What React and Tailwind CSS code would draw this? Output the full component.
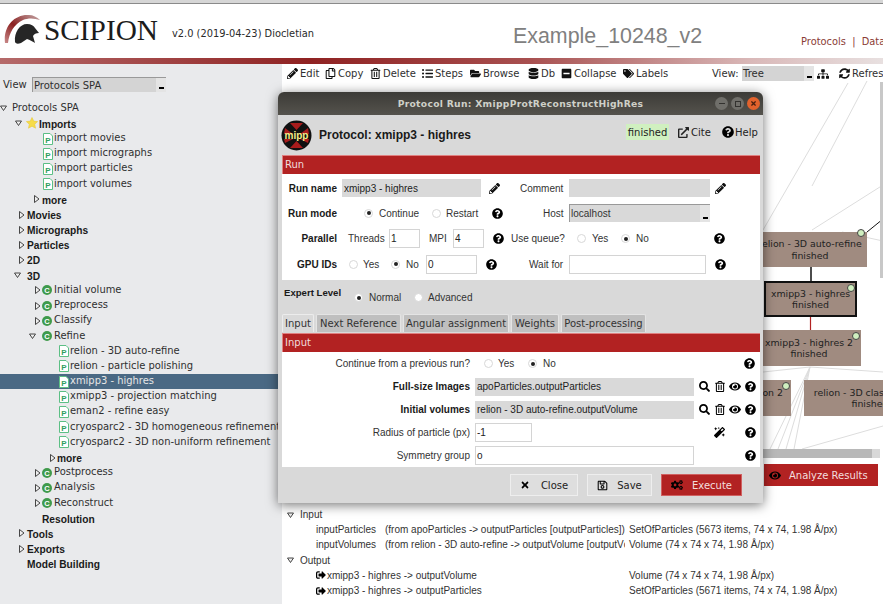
import {
  FaCogs, FaDatabase, FaExternalLinkAlt, FaEye, FaFolderOpen, FaListUl, FaMagic, FaMinusSquare,
  FaPencilAlt, FaQuestionCircle, FaRegCopy, FaRegSave, FaRegTrashAlt, FaSearch, FaSignOutAlt, FaSitemap, FaSyncAlt,
  FaTags, FaTimes,
} from 'react-icons/fa'

const DEJA = "font-['DejaVu_Sans',sans-serif]"
const LIB = "font-['Liberation_Sans',sans-serif]"

// Tree rows, all 15.2px tall
const tree = [
  { label: 'Protocols SPA', pad: 'pl-0', tri: 'open', triW: 'w-[12px]' },
  { label: 'Imports', pad: 'pl-[15px]', tri: 'open', triW: 'w-[11px]', icon: 'star', bold: true },
  { label: 'import movies', pad: 'pl-[43px]', icon: 'doc' },
  { label: 'import micrographs', pad: 'pl-[43px]', icon: 'doc' },
  { label: 'import particles', pad: 'pl-[43px]', icon: 'doc' },
  { label: 'import volumes', pad: 'pl-[43px]', icon: 'doc' },
  { label: 'more', pad: 'pl-[33px]', tri: 'closed', triW: 'w-[9px]', bold: true },
  { label: 'Movies', pad: 'pl-[18px]', tri: 'closed', triW: 'w-[9px]', bold: true },
  { label: 'Micrographs', pad: 'pl-[18px]', tri: 'closed', triW: 'w-[9px]', bold: true },
  { label: 'Particles', pad: 'pl-[18px]', tri: 'closed', triW: 'w-[9px]', bold: true },
  { label: '2D', pad: 'pl-[18px]', tri: 'closed', triW: 'w-[9px]', bold: true },
  { label: '3D', pad: 'pl-[14px]', tri: 'open', triW: 'w-[13px]', bold: true },
  { label: 'Initial volume', pad: 'pl-[34px]', tri: 'closed', triW: 'w-[8px]', icon: 'cat' },
  { label: 'Preprocess', pad: 'pl-[34px]', tri: 'closed', triW: 'w-[8px]', icon: 'cat' },
  { label: 'Classify', pad: 'pl-[34px]', tri: 'closed', triW: 'w-[8px]', icon: 'cat' },
  { label: 'Refine', pad: 'pl-[29px]', tri: 'open', triW: 'w-[13px]', icon: 'cat' },
  { label: 'relion - 3D auto-refine', pad: 'pl-[59px]', icon: 'doc' },
  { label: 'relion - particle polishing', pad: 'pl-[59px]', icon: 'doc' },
  { label: 'xmipp3 - highres', pad: 'pl-[59px]', icon: 'doc', selected: true },
  { label: 'xmipp3 - projection matching', pad: 'pl-[59px]', icon: 'doc' },
  { label: 'eman2 - refine easy', pad: 'pl-[59px]', icon: 'doc' },
  { label: 'cryosparc2 - 3D homogeneous refinement', pad: 'pl-[59px]', icon: 'doc' },
  { label: 'cryosparc2 - 3D non-uniform refinement', pad: 'pl-[59px]', icon: 'doc' },
  { label: 'more', pad: 'pl-[49px]', tri: 'closed', triW: 'w-[8px]', bold: true },
  { label: 'Postprocess', pad: 'pl-[34px]', tri: 'closed', triW: 'w-[8px]', icon: 'cat' },
  { label: 'Analysis', pad: 'pl-[34px]', tri: 'closed', triW: 'w-[8px]', icon: 'cat' },
  { label: 'Reconstruct', pad: 'pl-[34px]', tri: 'closed', triW: 'w-[8px]', icon: 'cat' },
  { label: 'Resolution', pad: 'pl-[42px]', bold: true },
  { label: 'Tools', pad: 'pl-[18px]', tri: 'closed', triW: 'w-[9px]', bold: true },
  { label: 'Exports', pad: 'pl-[18px]', tri: 'closed', triW: 'w-[9px]', bold: true },
  { label: 'Model Building', pad: 'pl-[27px]', bold: true },
]

const tools = [
  { label: 'Edit', Icon: FaPencilAlt, cls: 'w-[38px]' },
  { label: 'Copy', Icon: FaRegCopy, cls: 'w-[45px]' },
  { label: 'Delete', Icon: FaRegTrashAlt, cls: 'w-[52px]' },
  { label: 'Steps', Icon: FaListUl, cls: 'w-[48px]' },
  { label: 'Browse', Icon: FaFolderOpen, cls: 'w-[58px]' },
  { label: 'Db', Icon: FaDatabase, cls: 'w-[33px]' },
  { label: 'Collapse', Icon: FaMinusSquare, cls: 'w-[62px]' },
  { label: 'Labels', Icon: FaTags, cls: 'w-[89px]' },
]

function Triangle({ open }) {
  return (
    <svg width="7" height="8" viewBox="0 0 7 8" className="shrink-0">
      <path
        d={open ? 'M0.5 2 L6.5 2 L3.5 6.5 Z' : 'M1.5 0.5 L6 4 L1.5 7.5 Z'}
        fill="#eeeeee"
        stroke="#333333"
        strokeWidth="0.9"
      />
    </svg>
  )
}

function DocIcon() {
  return (
    <svg width="10" height="12" viewBox="0 0 10 12" className="shrink-0">
      <path d="M0.5 0.5 H7 L9.5 3 V11.5 H0.5 Z" fill="#ffffff" stroke="#5cbf85" />
      <text x="5" y="9.5" fontSize="8" fontWeight="700" textAnchor="middle" fill="#2f9e5f" fontFamily="Liberation Sans">P</text>
    </svg>
  )
}

function CatIcon() {
  return (
    <svg width="10" height="10" viewBox="0 0 10 10" className="shrink-0">
      <circle cx="5" cy="5" r="5" fill="#3f9a4b" />
      <text x="5" y="7.6" fontSize="7.5" fontWeight="700" textAnchor="middle" fill="#ffffff" fontFamily="Liberation Sans">C</text>
    </svg>
  )
}

function StarIcon() {
  return (
    <svg width="12" height="12" viewBox="0 0 12 12" className="shrink-0">
      <path d="M6 0.5 L7.7 4.1 L11.6 4.6 L8.7 7.2 L9.5 11.2 L6 9.2 L2.5 11.2 L3.3 7.2 L0.4 4.6 L4.3 4.1 Z" fill="#f6dc4a" stroke="#e8c93a" strokeWidth="0.6" />
    </svg>
  )
}

function TreeRow({ row }) {
  return (
    <div className={`flex h-[15.2px] items-center ${row.pad} ${row.selected ? 'bg-[#4a6984] text-[#e6e6e6]' : 'text-[#2f2f2f]'}`}>
      {row.tri && (
        <span className={`flex shrink-0 ${row.triW}`}>
          <Triangle open={row.tri === 'open'} />
        </span>
      )}
      {row.icon === 'star' && <span className="flex w-[13px] shrink-0"><StarIcon /></span>}
      {row.icon === 'doc' && <span className="flex w-[11px] shrink-0"><DocIcon /></span>}
      {row.icon === 'cat' && <span className="flex w-[12px] shrink-0"><CatIcon /></span>}
      {row.bold
        ? <span className={`${LIB} whitespace-nowrap pt-[2px] text-[10.2px] font-bold text-[#1a1a1a]`}>{row.label}</span>
        : <span className={`${DEJA} whitespace-nowrap text-[9.95px]`}>{row.label}</span>}
    </div>
  )
}

function ComboArrow() {
  return (
    <span className="flex h-full w-[10px] shrink-0 items-end justify-center bg-[#e4e4e4] pb-[3px]">
      <span className="h-[2px] w-[5px] bg-black" />
    </span>
  )
}

function Radio({ checked, cls = '' }) {
  return (
    <span className={`flex h-[9px] w-[9px] shrink-0 items-center justify-center rounded-full border border-[#d8d8d8] bg-white ${cls}`}>
      {checked && <span className="h-[4px] w-[4px] rounded-full bg-[#222222]" />}
    </span>
  )
}

function Help({ cls = '' }) {
  return <FaQuestionCircle className={`h-[11px] w-[11px] shrink-0 text-black ${cls}`} />
}

function Field({ cls, children }) {
  return (
    <span className={`flex shrink-0 items-center border border-[#d4d4d4] bg-white pl-[1px] text-[10px] text-[#222222] ${cls}`}>
      {children}
    </span>
  )
}

function ReadOnly({ cls, children }) {
  return (
    <span className={`flex h-[18px] shrink-0 items-center bg-[#d9d9d9] pl-[2px] text-[10px] text-[#222222] ${cls}`}>
      {children}
    </span>
  )
}

function RedBar({ label, cls }) {
  return (
    <div className={`${DEJA} flex items-center border-t border-l border-[#e08080] border-r-[#7a1515] border-b-[#7a1515] bg-[#b22222] pb-[2px] pl-[2px] text-[10px] text-[#f0dcdc] ${cls}`}>
      {label}
    </div>
  )
}

function RunForm() {
  return (
    <div className={`${LIB} h-[106px] bg-white pt-[1.5px] text-[10px] text-[#333333]`}>
      <div className="flex h-[25.3px] items-center">
        <span className="w-[55px] shrink-0 text-right font-bold text-[#1a1a1a]">Run name</span>
        <ReadOnly cls="ml-[5px] w-[139px]">xmipp3 - highres</ReadOnly>
        <FaPencilAlt className="ml-[8px] h-[11px] w-[11px] shrink-0 text-[#111111]" />
        <span className="ml-[20px] w-[45px] shrink-0">Comment</span>
        <ReadOnly cls="ml-[4px] w-[141px]" />
        <FaPencilAlt className="ml-[5px] h-[11px] w-[11px] shrink-0 text-[#111111]" />
      </div>
      <div className="flex h-[25.3px] items-center">
        <span className="w-[55px] shrink-0 text-right font-bold text-[#1a1a1a]">Run mode</span>
        <Radio checked cls="ml-[27px]" />
        <span className="ml-[6px] w-[45px] shrink-0">Continue</span>
        <Radio cls="ml-[8px]" />
        <span className="ml-[5px] w-[34px] shrink-0">Restart</span>
        <Help cls="ml-[12px]" />
        <span className="ml-[40px] w-[26px] shrink-0">Host</span>
        <span className="flex h-[18px] w-[141px] shrink-0 items-center justify-between border-t border-l border-[#999999] bg-[#d9d9d9] pl-[1px]">
          localhost
          <ComboArrow />
        </span>
      </div>
      <div className="flex h-[25.3px] items-center">
        <span className="w-[55px] shrink-0 text-right font-bold text-[#1a1a1a]">Parallel</span>
        <span className="ml-[11px] w-[41px] shrink-0">Threads</span>
        <Field cls="h-[19px] w-[31px]">1</Field>
        <span className="ml-[9px] w-[24px] shrink-0">MPI</span>
        <Field cls="h-[19px] w-[31px]">4</Field>
        <Help cls="ml-[9px]" />
        <span className="ml-[7px] w-[53px] shrink-0 whitespace-nowrap">Use queue?</span>
        <Radio cls="ml-[13px]" />
        <span className="ml-[6px] w-[29px] shrink-0">Yes</span>
        <Radio checked />
        <span className="ml-[6px] w-[78px] shrink-0">No</span>
        <Help />
      </div>
      <div className="flex h-[25.3px] items-center">
        <span className="w-[55px] shrink-0 text-right font-bold text-[#1a1a1a]">GPU IDs</span>
        <Radio cls="ml-[12px]" />
        <span className="ml-[5px] w-[28px] shrink-0">Yes</span>
        <Radio checked />
        <span className="ml-[6px] w-[20px] shrink-0">No</span>
        <Field cls="h-[19px] w-[51px]">0</Field>
        <Help cls="ml-[9px]" />
        <span className="ml-[32px] w-[40px] shrink-0">Wait for</span>
        <Field cls="h-[19px] w-[137px]" />
        <Help cls="ml-[9px]" />
      </div>
    </div>
  )
}

function ObjectIcons() {
  return (
    <>
      <FaSearch className="ml-[5px] h-[11px] w-[11px] shrink-0 text-black" />
      <FaRegTrashAlt className="ml-[5px] h-[11px] w-[10px] shrink-0 text-black" />
      <FaEye className="ml-[4px] h-[11px] w-[12px] shrink-0 text-black" />
      <Help cls="ml-[4px]" />
    </>
  )
}

function InputForm() {
  return (
    <div className={`${LIB} h-[115px] bg-white text-[10px] text-[#333333]`}>
      <div className="flex h-[23px] items-center">
        <span className="w-[188px] shrink-0 text-right">Continue from a previous run?</span>
        <Radio cls="ml-[14px]" />
        <span className="ml-[5px] w-[30px] shrink-0">Yes</span>
        <Radio checked />
        <span className="ml-[6px] w-[201px] shrink-0">No</span>
        <Help />
      </div>
      <div className="flex h-[23px] items-center">
        <span className="w-[188px] shrink-0 text-right font-bold text-[#1a1a1a]">Full-size Images</span>
        <ReadOnly cls="ml-[5px] w-[219px]">apoParticles.outputParticles</ReadOnly>
        <ObjectIcons />
      </div>
      <div className="flex h-[23px] items-center">
        <span className="w-[188px] shrink-0 text-right font-bold text-[#1a1a1a]">Initial volumes</span>
        <ReadOnly cls="ml-[5px] w-[219px]">relion - 3D auto-refine.outputVolume</ReadOnly>
        <ObjectIcons />
      </div>
      <div className="flex h-[23px] items-center">
        <span className="w-[188px] shrink-0 text-right">Radius of particle (px)</span>
        <Field cls="ml-[5px] h-[19px] w-[57px]">-1</Field>
        <FaMagic className="ml-[182px] h-[11px] w-[11px] shrink-0 text-black" />
        <Help cls="ml-[20px]" />
      </div>
      <div className="flex h-[23px] items-center">
        <span className="w-[188px] shrink-0 text-right">Symmetry group</span>
        <Field cls="ml-[5px] h-[19px] w-[219px]">o</Field>
        <Help cls="ml-[51px]" />
      </div>
    </div>
  )
}

function Dialog() {
  const tabs = [
    { label: 'Next Reference', cls: 'w-[85px]' },
    { label: 'Angular assignment', cls: 'w-[106px]' },
    { label: 'Weights', cls: 'w-[48px]' },
    { label: 'Post-processing', cls: 'w-[85px]' },
  ]
  return (
    <div className="absolute left-[278px] top-[92px] h-[411px] w-[485px] rounded-t-[6px] bg-[#d9d9d9] shadow-[0_2px_12px_rgba(0,0,0,0.55)]">
      <div className={`${DEJA} relative flex h-[23px] items-center justify-center rounded-t-[6px] bg-gradient-to-b from-[#3c3b37] to-[#55534d] text-[9.2px] font-bold tracking-[0.3px] text-[#cfd0c8]`}>
        Protocol Run: XmippProtReconstructHighRes
        <div className="absolute right-[3px] top-[5px] flex gap-[3px]">
          <span className="flex h-[13px] w-[13px] items-center justify-center rounded-full bg-[#706f6a]"><span className="h-[1px] w-[6px] bg-[#33322f]" /></span>
          <span className="flex h-[13px] w-[13px] items-center justify-center rounded-full bg-[#706f6a]"><span className="h-[6px] w-[6px] border border-[#33322f]" /></span>
          <span className="flex h-[13px] w-[13px] items-center justify-center rounded-full bg-[#e2622c]"><FaTimes className="h-[7px] w-[7px] text-[#4a2010]" /></span>
        </div>
      </div>

      <div className="pl-[4px] pr-[3px]">
        <div className="flex h-[40px] items-center">
          <svg width="31" height="31" viewBox="0 0 31 31" className="-ml-[1px] shrink-0">
            <circle cx="15.5" cy="15.5" r="15" fill="#111111" />
            <path d="M9 3 L15.5 10 L22 3 Z M9 28 L15.5 21 L22 28 Z" fill="#a81c1c" />
            <path d="M4 8 L12 14 L3 14 Z M27 8 L19 14 L28 14 Z M4 23 L12 19 L3 19 Z M27 23 L19 19 L28 19 Z" fill="#a81c1c" />
            <text x="15.5" y="19" fontSize="10" fontWeight="700" textAnchor="middle" fill="#f5ee8a" fontFamily="Liberation Sans">mipp</text>
          </svg>
          <span className={`${LIB} ml-[7px] w-[307px] shrink-0 text-[12px] font-bold text-[#1a1a1a]`}>Protocol: xmipp3 - highres</span>
          <div className={`${DEJA} flex items-center pb-[6px] text-[10px] text-[#222222]`}>
            <span className="flex h-[16px] w-[43px] shrink-0 items-center justify-center bg-[#d0f0c0]">finished</span>
            <FaExternalLinkAlt className="ml-[9px] h-[11px] w-[11px] shrink-0" />
            <span className="ml-[2px] w-[31px] shrink-0">Cite</span>
            <FaQuestionCircle className="h-[12px] w-[12px] shrink-0 text-black" />
            <span className="ml-[1px]">Help</span>
          </div>
        </div>

        <RedBar label="Run" cls="h-[19px]" />
        <RunForm />

        <div className={`${LIB} flex h-[34px] items-center pt-[1px] text-[10px] text-[#333333]`}>
          <span className="-mt-[9px] w-[72px] shrink-0 pl-[2px] text-[9.6px] font-bold text-[#1a1a1a]">Expert Level</span>
          <Radio checked />
          <span className="ml-[6px] w-[45px] shrink-0">Normal</span>
          <Radio />
          <span className="ml-[5px]">Advanced</span>
        </div>

        <div className={`${DEJA} flex h-[19px] gap-[2px] pb-[1px] text-[10px] text-[#333333]`}>
          <span className="flex w-[32px] items-center justify-center rounded-t-[2px] border border-b-0 border-[#ececec] bg-[#d9d9d9]">Input</span>
          {tabs.map((tab) => (
            <span key={tab.label} className={`flex items-center justify-center rounded-t-[2px] border border-b-0 border-[#e4e4e4] bg-[#bfbfbf] ${tab.cls}`}>
              {tab.label}
            </span>
          ))}
        </div>
        <RedBar label="Input" cls="h-[19px]" />
        <InputForm />

        <div className={`${DEJA} flex h-[36px] items-center pl-[228px] text-[10px] text-[#222222]`}>
          <span className="flex h-[22px] w-[68px] items-center justify-center gap-[11px] border border-[#eeeeee] bg-[#dedede]"><FaTimes className="h-[10px] w-[10px] text-black" />Close</span>
          <span className="ml-[9px] flex h-[22px] w-[65px] items-center justify-center gap-[9px] border border-[#eeeeee] bg-[#dedede]"><FaRegSave className="h-[11px] w-[11px] text-black" />Save</span>
          <span className="ml-[9px] flex h-[22px] w-[81px] items-center justify-center gap-[9px] border border-[#d06060] bg-[#b22222] text-[#f2dede]"><FaCogs className="h-[12px] w-[12px] text-black" />Execute</span>
        </div>
      </div>
    </div>
  )
}

// Workflow canvas, the boxes sit at free positions
function Canvas() {
  const node = "absolute flex flex-col items-center justify-center bg-[#a08b80] text-[9.4px] leading-[11.5px] text-[#222222]"
  const dot = 'absolute h-[8px] w-[8px] rounded-full border border-[#444444] bg-[#d0f0c0]'
  return (
    <div className={`${DEJA} relative h-[379px] overflow-hidden bg-white`}>
      <svg width="601" height="379" className="absolute left-0 top-0">
        <g stroke="#dddddd" strokeWidth="1" fill="none">
          <line x1="566" y1="2" x2="481" y2="149" />
          <line x1="585" y1="0" x2="530" y2="105" />
          <line x1="601" y1="104" x2="530" y2="149" />
          <line x1="601" y1="160" x2="560" y2="151" />
          <line x1="528" y1="286" x2="481" y2="291" />
          <line x1="528" y1="286" x2="601" y2="291" />
          <line x1="528" y1="286" x2="488" y2="368" />
          <line x1="528" y1="286" x2="496" y2="368" />
          <line x1="528" y1="286" x2="504" y2="368" />
          <line x1="528" y1="286" x2="512" y2="368" />
          <line x1="520" y1="368" x2="601" y2="345" />
        </g>
        <line x1="529" y1="186" x2="529" y2="200" stroke="#111111" strokeWidth="1.5" />
        <line x1="529" y1="186" x2="548" y2="170" stroke="#111111" strokeWidth="1" />
        <line x1="585" y1="151" x2="601" y2="138" stroke="#111111" strokeWidth="1" />
        <line x1="528.5" y1="235" x2="528.5" y2="249" stroke="#b22222" strokeWidth="1.2" />
      </svg>
      <div className={`${node} left-[471px] top-[151px] h-[35px] w-[114px]`}>
        <span className="whitespace-nowrap">relion - 3D auto-refine</span>
        <span>finished</span>
        <span className={`${dot} right-[2px] top-[-3px]`} />
      </div>
      <div className={`${node} left-[482px] top-[200px] h-[36px] w-[93px] border-2 border-[#111111]`}>
        <span className="whitespace-nowrap">xmipp3 - highres</span>
        <span>finished</span>
        <span className={`${dot} right-0 top-[1px]`} />
      </div>
      <div className={`${node} left-[475px] top-[249px] h-[36px] w-[104px]`}>
        <span className="whitespace-nowrap">xmipp3 - highres 2</span>
        <span>finished</span>
        <span className={`${dot} right-[1px] top-[2px]`} />
      </div>
      <div className={`${node} left-[475px] top-[299px] h-[36px] w-[34px] items-end pr-[8px]`}>
        <span className="-mt-[11px] whitespace-nowrap">on 2</span>
        <span className={`${dot} right-[1px] top-[2px]`} />
      </div>
      <div className={`${node} left-[522px] top-[299px] h-[36px] w-[132px]`}>
        <span className="whitespace-nowrap">relion - 3D classification</span>
        <span>finished</span>
      </div>
      <div className="absolute right-0 top-[1px] h-[196px] w-[3px] bg-[#c8c8c8]" />
      <div className="absolute bottom-[2px] left-0 flex h-[9px] w-[598px] justify-end bg-[#b8b8b8]">
        <span className="w-[8px] bg-[#d8d8d8]" />
      </div>
    </div>
  )
}

function DetailTable() {
  const value = 'whitespace-nowrap'
  return (
    <div className={`${LIB} text-[10px] text-[#333333]`}>
      <div className="flex h-[15.2px] items-center pl-[5px]"><span className="flex w-[13px]"><Triangle open /></span>Input</div>
      <div className="flex h-[15.2px] items-center">
        <span className="ml-[34px] w-[69px] shrink-0">inputParticles</span>
        <span className="w-[244px] shrink-0 overflow-hidden whitespace-nowrap">(from apoParticles -&gt; outputParticles [outputParticles])</span>
        <span className={value}>SetOfParticles (5673 items, 74 x 74, 1.98 Å/px)</span>
      </div>
      <div className="flex h-[15.2px] items-center">
        <span className="ml-[34px] w-[69px] shrink-0">inputVolumes</span>
        <span className="mr-[4px] w-[240px] shrink-0 overflow-hidden whitespace-nowrap">(from relion - 3D auto-refine -&gt; outputVolume [outputVc</span>
        <span className={value}>Volume (74 x 74 x 74, 1.98 Å/px)</span>
      </div>
      <div className="flex h-[15.2px] items-center pl-[5px]"><span className="flex w-[13px]"><Triangle open /></span>Output</div>
      <div className="flex h-[15.2px] items-center">
        <FaSignOutAlt className="ml-[33px] h-[10px] w-[12px] shrink-0 text-black" />
        <span className="w-[302px] shrink-0">xmipp3 - highres -&gt; outputVolume</span>
        <span className={value}>Volume (74 x 74 x 74, 1.98 Å/px)</span>
      </div>
      <div className="flex h-[15.2px] items-center">
        <FaSignOutAlt className="ml-[33px] h-[10px] w-[12px] shrink-0 text-black" />
        <span className="w-[302px] shrink-0">xmipp3 - highres -&gt; outputParticles</span>
        <span className={value}>SetOfParticles (5671 items, 74 x 74, 1.98 Å/px)</span>
      </div>
    </div>
  )
}

export default function App() {
  return (
    <div className="relative h-[604px] w-[883px] overflow-hidden bg-white">
      <div className="h-[4px] border-b border-[#8a8a8a] bg-[#d6d6d6]" />

      <div className="flex h-[54px] items-start overflow-hidden whitespace-nowrap">
        <svg width="40" height="40" viewBox="0 0 40 40" className="ml-[4px] mt-[9px] shrink-0">
          <defs>
            <linearGradient id="arc" x1="0" y1="1" x2="1" y2="0">
              <stop offset="0%" stopColor="#c98a8a" />
              <stop offset="45%" stopColor="#8b2020" />
              <stop offset="100%" stopColor="#c4a8a8" />
            </linearGradient>
          </defs>
          <path d="M1 30 C-1 14 10 1 25 2 C29 2 33 4 36 7 C30 5 24 5 19 7 C10 11 5 20 4 30 Z" fill="url(#arc)" />
          <path d="M11 29 C10 19 16 11 23 11 C27 11 30 13 31 15 L35 20 C32 20 30 21 29 23 L31 30 C28 28 26 27 23 26 C21 27 19 29 17 30 C14 31 12 31 11 29 Z" fill="#262626" />
        </svg>
        <span className="mt-[9px] font-['Liberation_Serif',serif] text-[29.3px] leading-[34px] text-[#1c1c1c]">SCIPION</span>
        <span className={`${DEJA} ml-[14px] mt-[23px] text-[9.85px] text-[#2a2a2a]`}>v2.0 (2019-04-23) Diocletian</span>
        <span className={`${LIB} ml-[199px] mt-[18px] text-[21.4px] leading-[28px] text-[#808080]`}>Example_10248_v2</span>
        <span className={`${DEJA} ml-[99px] mt-[31px] text-[9.85px] text-[#8a3b34]`}>Protocols&nbsp;&nbsp;|&nbsp;&nbsp;Data</span>
      </div>

      <div className="h-[6px] bg-[linear-gradient(90deg,#b56a6a_0%,#8f2222_35%,#a85050_60%,#d9b8b8_85%,#e8e0e0_100%)]" />

      <div className="flex h-[540px]">
        <aside className="w-[282px] shrink-0 bg-[#e9eaec]">
          <div className={`${DEJA} flex h-[36.6px] items-start pl-[3px] pt-[13px] text-[10px] text-[#2f2f2f]`}>
            <span className="flex h-[14px] w-[29px] items-center">View</span>
            <span className="flex h-[15px] w-[134px] items-center justify-between border-t border-l border-[#999999] bg-[#d4d4d4] pl-[1px]">
              Protocols SPA
              <ComboArrow />
            </span>
          </div>
          {tree.map((row, i) => (
            <TreeRow key={i} row={row} />
          ))}
        </aside>

        <main className="min-w-0 flex-1">
          <div className={`${DEJA} flex h-[17px] items-center overflow-hidden whitespace-nowrap pl-[5px] pt-[2px] text-[10px] text-[#2f2f2f]`}>
            {tools.map(({ label, Icon, cls }) => (
              <span key={label} className={`flex shrink-0 items-center gap-[2px] ${cls}`}>
                <Icon className="h-[11px] w-[11px] shrink-0 text-[#111111]" />
                {label}
              </span>
            ))}
            <span className="w-[30px] shrink-0">View:</span>
            <span className="flex h-[15px] w-[72px] shrink-0 items-center justify-between bg-[#d4d4d4] pl-[1px]">
              Tree
              <ComboArrow />
            </span>
            <FaSitemap className="ml-[3px] h-[12px] w-[12px] shrink-0 text-[#111111]" />
            <FaSyncAlt className="ml-[10px] h-[11px] w-[11px] shrink-0 text-[#111111]" />
            <span className="ml-[2px]">Refresh</span>
          </div>

          <Canvas />

          <div className="flex h-[30px] justify-end pr-[5px] pt-[4px]">
            <span className={`${DEJA} flex h-[22px] w-[114px] items-center gap-[8px] bg-[#b22222] pl-[5px] text-[10px] text-[#f2dede]`}>
              <FaEye className="h-[11px] w-[12px] text-black" />
              Analyze Results
            </span>
          </div>

          <div className="h-[17px]" />
          <DetailTable />
        </main>
      </div>

      <Dialog />
    </div>
  )
}
